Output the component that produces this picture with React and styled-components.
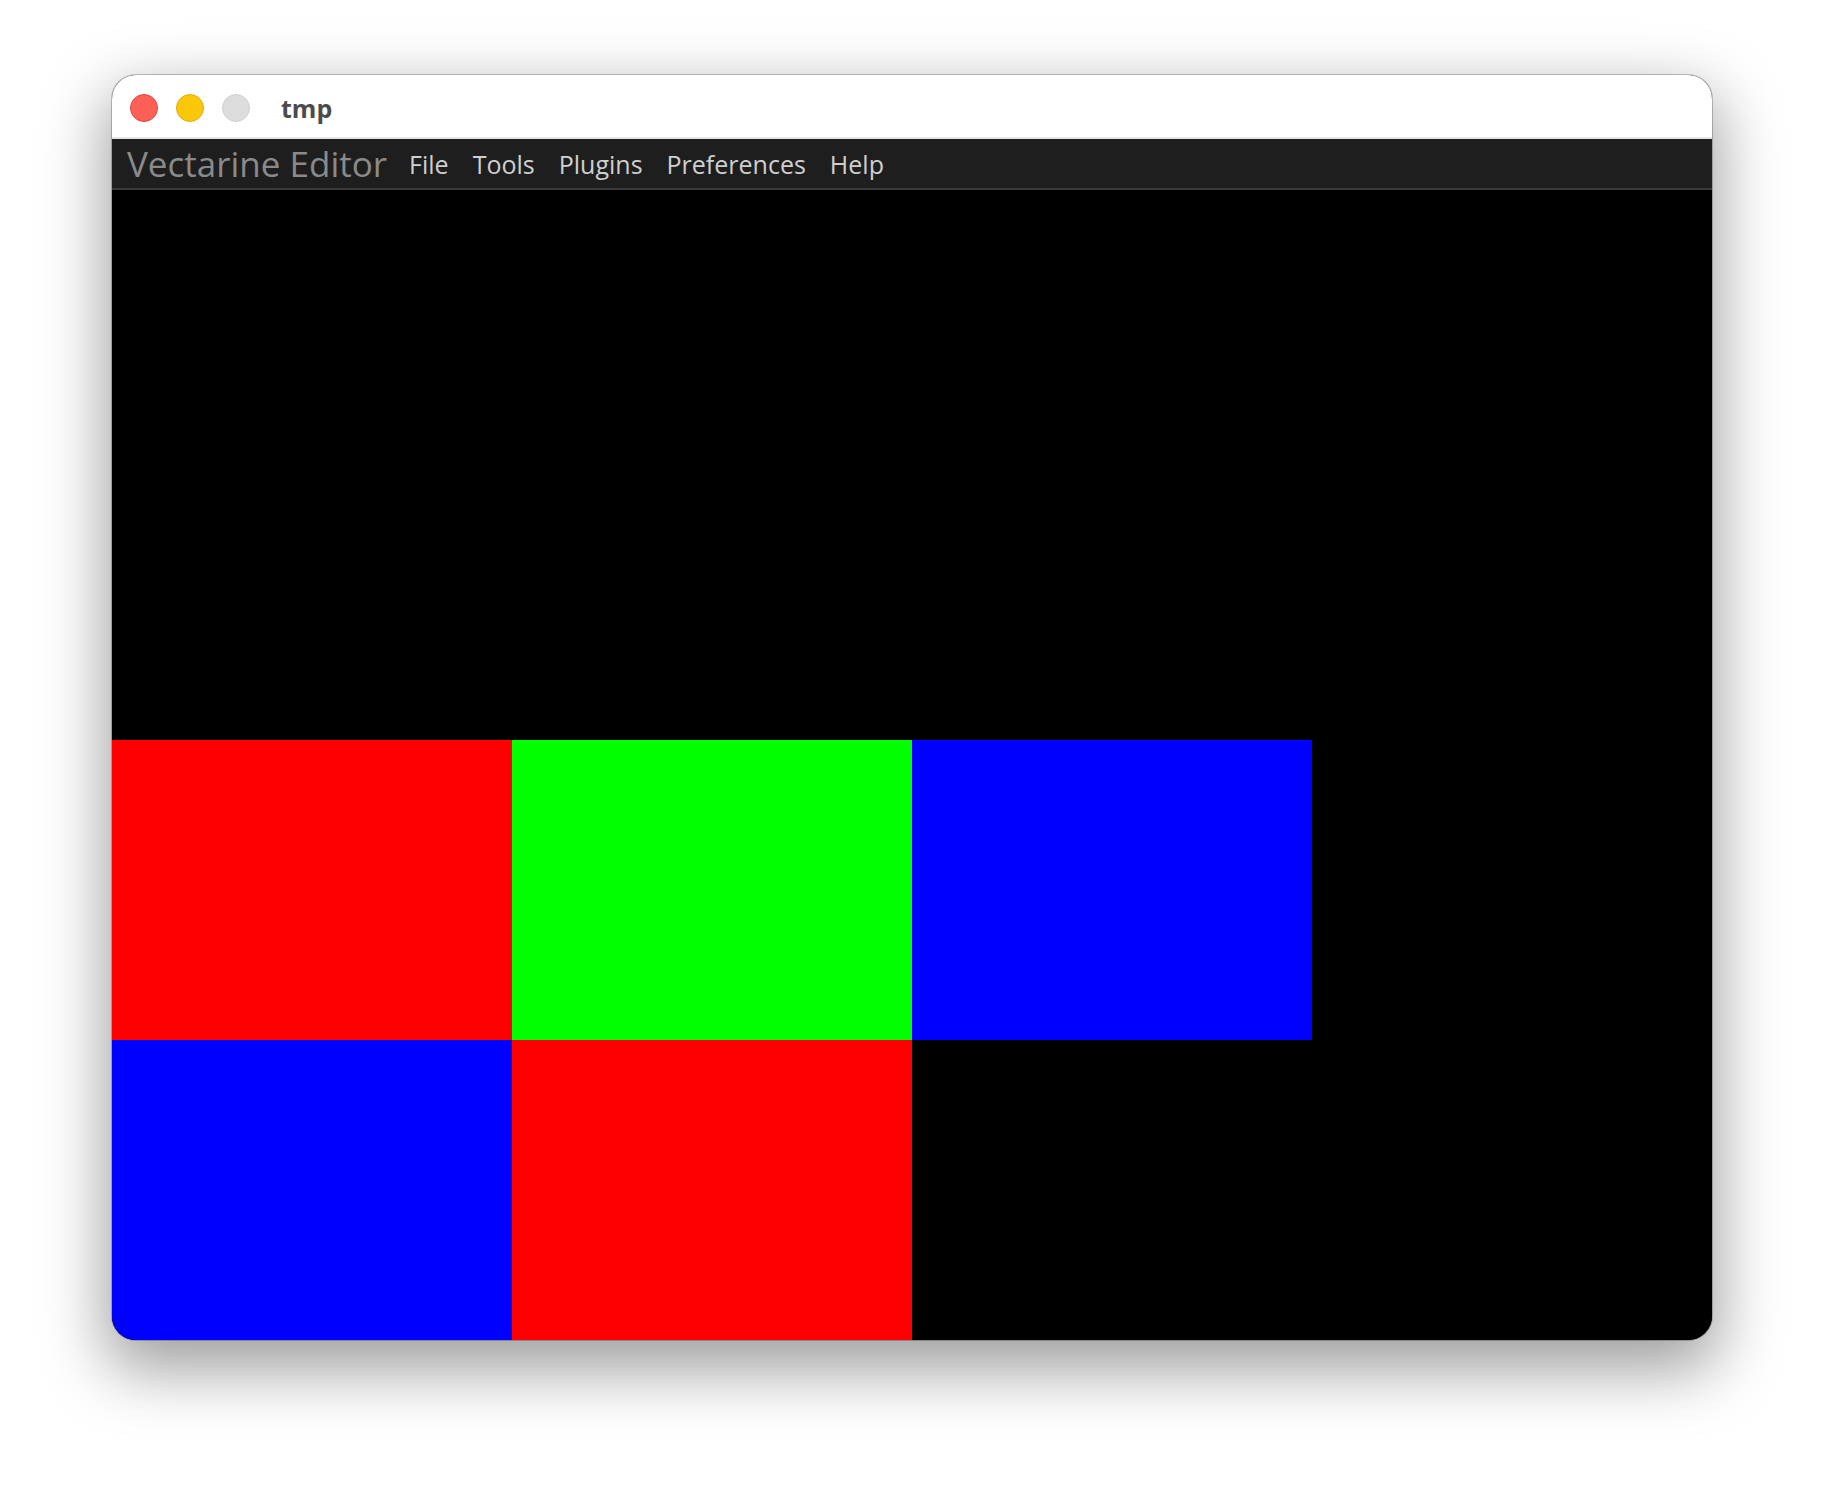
import React from "react";
import styled, { createGlobalStyle } from "styled-components";

const Global = createGlobalStyle`
  html, body { margin: 0; padding: 0; background: #ffffff; }
  body { width: 1824px; height: 1488px; overflow: hidden; }
`;

const Page = styled.div`
  width: 1824px;
  height: 1488px;
  box-sizing: border-box;
  padding: 75px 0 0 112px;
  background: #ffffff;
`;

const Window = styled.div`
  width: 1600px;
  height: 1265px;
  border-radius: 24px;
  overflow: hidden;
  display: flex;
  flex-direction: column;
  background: #000;
  box-shadow: 0 0 0 1px rgba(0, 0, 0, 0.22), 0 24px 64px 6px rgba(0, 0, 0, 0.38);
`;

const TitleBar = styled.div`
  box-sizing: border-box;
  height: 64px;
  flex: none;
  background: #ffffff;
  border-bottom: 2px solid #e4e4e4;
  display: flex;
  align-items: center;
  padding: 4px 0 0 18px;
  gap: 18px;
`;

const Light = styled.span`
  width: 28px;
  height: 28px;
  border-radius: 50%;
  box-sizing: border-box;
  background: ${(p) => p.$color};
  border: 1px solid ${(p) => p.$edge};
`;

const Title = styled.span`
  margin-left: 13px;
  font-family: "Open Sans", "Liberation Sans", sans-serif;
  font-weight: 700;
  font-size: 25px;
  color: #4b4b4b;
`;

const MenuBar = styled.div`
  height: 49px;
  flex: none;
  background: #1e1e1e;
  border-bottom: 2px solid #3a3a3a;
  display: flex;
  align-items: center;
  padding-left: 15px;
`;

const AppName = styled.span`
  font-family: "Open Sans", "Liberation Sans", sans-serif;
  font-size: 35px;
  color: #8a8a8a;
  margin-right: 22px;
`;

const MenuItem = styled.span`
  font-family: "Open Sans", "Liberation Sans", sans-serif;
  font-size: 25px;
  color: #cfcfcf;
  margin-right: 24px;
`;

const Canvas = styled.div`
  flex: 1;
  background: #000000;
  display: flex;
  flex-direction: column;
  justify-content: flex-end;
`;

const Grid = styled.div`
  display: grid;
  grid-template-columns: repeat(3, 400px);
  grid-auto-rows: 300px;
`;

const Tile = styled.div`
  background: ${(p) => p.$color};
`;

const menus = ["File", "Tools", "Plugins", "Preferences", "Help"];
const tiles = ["#ff0000", "#00ff00", "#0000ff", "#0000ff", "#ff0000", "#000000"];

export default function App() {
  return (
    <Page>
      <Global />
      <Window>
        <TitleBar>
          <Light $color="#fe5f57" $edge="#e2463f" />
          <Light $color="#fbc70b" $edge="#e1aa0a" />
          <Light $color="#dcdcdc" $edge="#cfcfcf" />
          <Title>tmp</Title>
        </TitleBar>
        <MenuBar>
          <AppName>Vectarine Editor</AppName>
          {menus.map((m) => (
            <MenuItem key={m}>{m}</MenuItem>
          ))}
        </MenuBar>
        <Canvas>
          <Grid>
            {tiles.map((c, i) => (
              <Tile key={i} $color={c} />
            ))}
          </Grid>
        </Canvas>
      </Window>
    </Page>
  );
}
